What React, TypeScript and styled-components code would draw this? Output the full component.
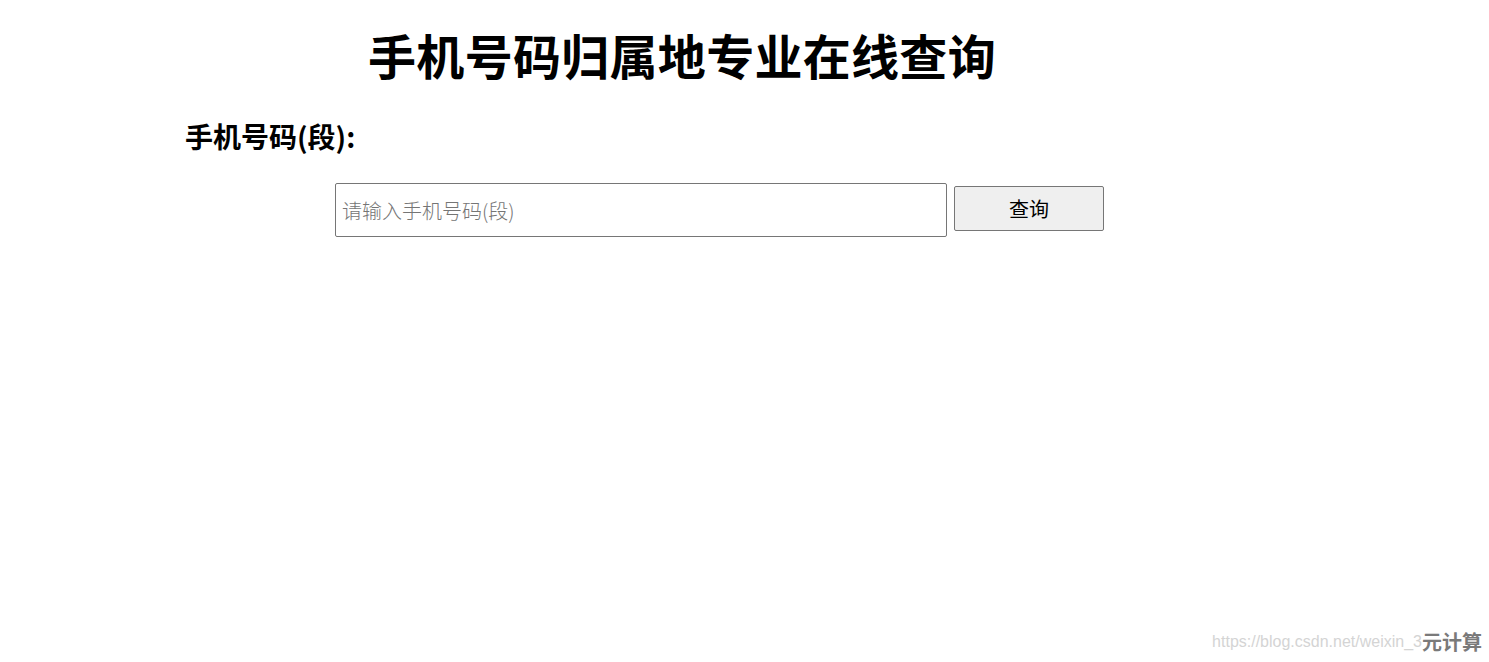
import styled, { createGlobalStyle } from "styled-components";

const GlobalStyle = createGlobalStyle`
  html, body {
    margin: 0;
    padding: 0;
    background: #ffffff;
  }
  body {
    font-family: "Noto Sans CJK SC", "Liberation Sans", sans-serif;
    color: #000;
  }
`;

const Page = styled.main`
  position: relative;
  width: 1489px;
  height: 662px;
  box-sizing: border-box;
  padding: 25px 0 0 185px;
`;

const Content = styled.div`
  width: 994px;
  display: flex;
  flex-direction: column;
`;

const Title = styled.h1`
  margin: 0;
  font-size: 48px;
  line-height: 58px;
  font-weight: 700;
  text-align: center;
  letter-spacing: 0.3px;
`;

const Label = styled.h3`
  margin: 36px 0 0;
  font-size: 28px;
  line-height: 34px;
  font-weight: 700;
`;

const SearchRow = styled.form`
  display: flex;
  align-items: flex-start;
  gap: 7px;
  margin-top: 30px;
  padding-left: 150px;
`;

const PhoneInput = styled.input`
  box-sizing: border-box;
  width: 612px;
  height: 54px;
  padding: 0 6px;
  border: 1px solid #767676;
  border-radius: 2px;
  font-family: "Noto Sans CJK SC", "Liberation Sans", sans-serif;
  font-size: 20px;
  color: #000;
  outline: none;

  &::placeholder {
    color: #757575;
    font-weight: 300;
  }
`;

const SearchButton = styled.button`
  box-sizing: border-box;
  width: 150px;
  height: 45px;
  margin-top: 3px;
  background: #efefef;
  border: 1px solid #767676;
  border-radius: 2px;
  font-family: "Noto Sans CJK SC", "Liberation Sans", sans-serif;
  font-size: 20px;
  color: #000;
  cursor: pointer;
`;

const Watermark = styled.div`
  position: absolute;
  right: 7px;
  bottom: 6px;
  display: flex;
  align-items: center;
`;

const WatermarkUrl = styled.span`
  font-family: "Liberation Sans", sans-serif;
  font-size: 16px;
  color: #d4d4d4;
`;

const WatermarkBrand = styled.span`
  font-family: "Noto Sans CJK SC", sans-serif;
  font-size: 20px;
  font-weight: 700;
  color: #7a7a7a;
`;

export default function App() {
  return (
    <>
      <GlobalStyle />
      <Page>
        <Content>
          <Title>手机号码归属地专业在线查询</Title>
          <Label>手机号码(段):</Label>
          <SearchRow onSubmit={(e) => e.preventDefault()}>
            <PhoneInput type="text" placeholder="请输入手机号码(段)" />
            <SearchButton type="submit">查询</SearchButton>
          </SearchRow>
        </Content>
        <Watermark>
          <WatermarkUrl>https://blog.csdn.net/weixin_3</WatermarkUrl>
          <WatermarkBrand>元计算</WatermarkBrand>
        </Watermark>
      </Page>
    </>
  );
}
